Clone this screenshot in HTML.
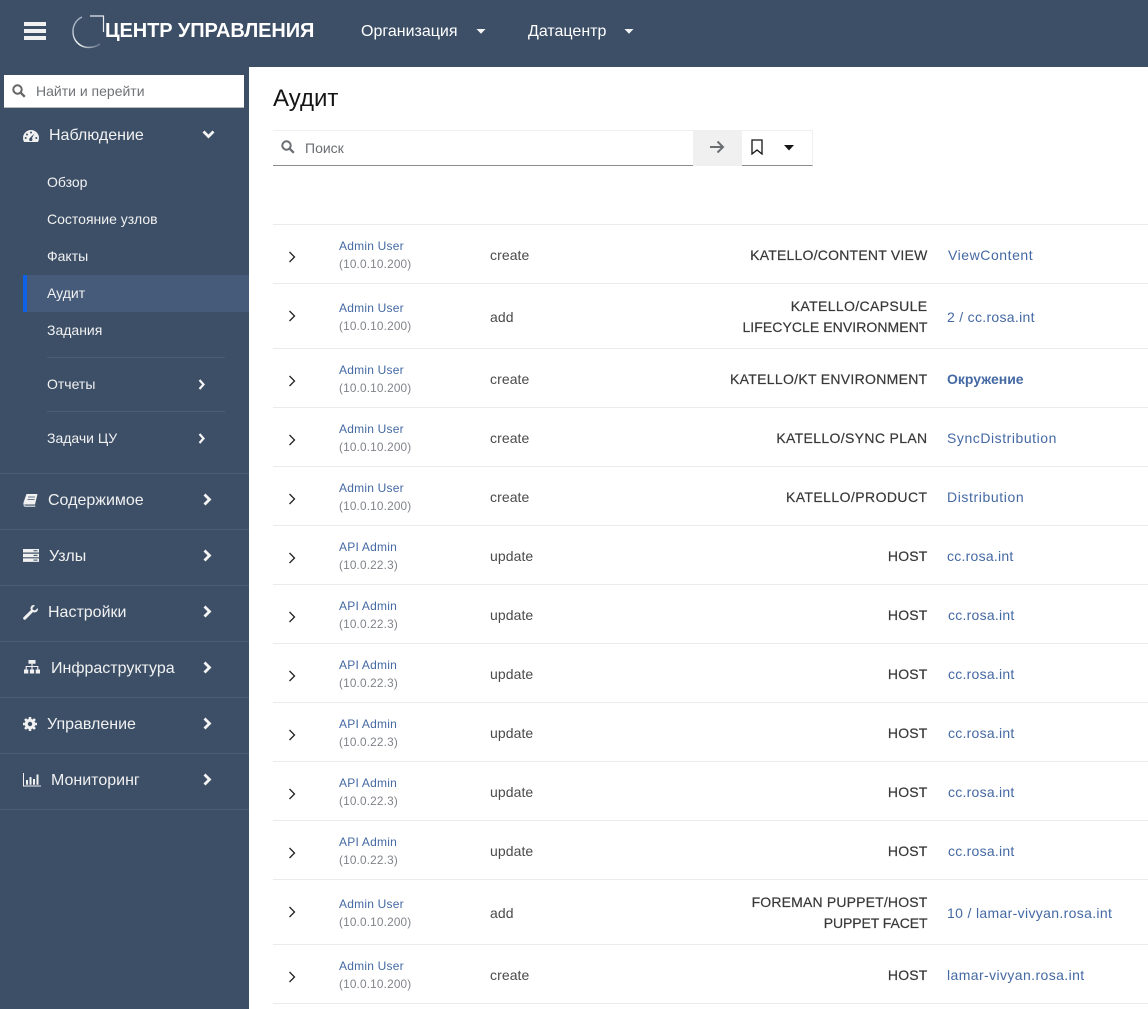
<!DOCTYPE html>
<html lang="ru"><head><meta charset="utf-8"><title>Аудит</title>
<style>
html,body{margin:0;padding:0}
body{width:1148px;height:1009px;overflow:hidden;position:relative;background:#3c4f67;font-family:"Liberation Sans",sans-serif}
.t{position:absolute;white-space:nowrap;line-height:20px}
.main{position:absolute;left:249px;top:67px;width:899px;height:942px;background:#fff}
.hd{color:#fff;font-size:16px;margin-top:1px}
.nav{color:#f1f1f1;font-size:16px;left:0;margin-top:1px}
.sub{color:#f1f1f1;font-size:14px;left:47px}
.sep{position:absolute;height:1px;background:#4a5d78}
.rs{position:absolute;left:273px;width:875px;height:1px;background:#ebebeb}
.u{left:339px;font-size:12px;color:#4469a3;letter-spacing:.22px}
.ip{left:339px;font-size:11.8px;color:#80848a;letter-spacing:.17px}
.a{left:490px;font-size:14px;color:#4a4a4a;letter-spacing:.08px}
.k{right:220.5px;font-size:14px;color:#383838;letter-spacing:.17px;font-weight:400;-webkit-text-stroke:.2px #383838}
.l{font-size:14px;color:#4469a3;letter-spacing:.25px}
svg{position:absolute;display:block}
</style></head><body>

<div style="position:absolute;left:24px;top:22px;width:22px;height:4px;background:#f1f1f1"></div>
<div style="position:absolute;left:24px;top:29px;width:22px;height:4px;background:#f1f1f1"></div>
<div style="position:absolute;left:24px;top:36px;width:22px;height:4px;background:#f1f1f1"></div>

<svg style="left:70px;top:14px" width="36" height="36" viewBox="0 0 36 36" fill="none">
<defs><linearGradient id="g1" x1="0" y1="0" x2="1" y2="1"><stop offset="0" stop-color="#8b9ab0"/><stop offset=".55" stop-color="#fff"/><stop offset="1" stop-color="#59697f"/></linearGradient></defs>
<path d="M12 3A15.500 15.500 0 0 0 3 18A15.500 15.500 0 0 0 18 33.500Q25 33.500 30 30" stroke="url(#g1)" stroke-width="1.400"/>
<path d="M20 2H33.500V18" stroke="#e7ebf0" stroke-width="1.200"/>
</svg>
<div class="t" style="left:105px;top:21px;color:#fff;font-size:20px;font-weight:700;letter-spacing:-.1px">ЦЕНТР УПРАВЛЕНИЯ</div>
<div class="t hd" style="left:361px;top:21px">Организация</div>
<svg style="left:476px;top:29px" width="10" height="6"><path d="M.5 0H9.500L5 4.800Z" fill="#f4f4f4"/></svg>
<div class="t hd" style="left:528px;top:21px">Датацентр</div>
<svg style="left:624px;top:29px" width="10" height="6"><path d="M.5 0H9.500L5 4.800Z" fill="#f4f4f4"/></svg>

<div style="position:absolute;left:4px;top:75px;width:240px;height:32px;background:#fff;border-bottom:1px solid #b8bbbe"></div>
<svg style="left:12px;top:84px" width="14" height="14" viewBox="0 0 14 14" fill="none"><circle cx="5.500" cy="5.500" r="4.200" stroke="#666" stroke-width="2"/><path d="M8.800 8.800L12.800 12.800" stroke="#666" stroke-width="2.400"/></svg>
<div class="t" style="left:36px;top:81px;font-size:14px;color:#6f7276">Найти и перейти</div>

<svg style="left:23px;top:128px" width="16" height="16" viewBox="0 0 16 16"><path d="M8 2A8 8 0 0 0 0 10Q0 12.500 1.200 14H14.800Q16 12.500 16 10A8 8 0 0 0 8 2Z" fill="#f1f1f1"/><circle cx="8" cy="4.500" r="1" fill="#3c4f67"/><circle cx="4" cy="6.500" r="1" fill="#3c4f67"/><circle cx="2.700" cy="10" r="1" fill="#3c4f67"/><circle cx="13.300" cy="10" r="1" fill="#3c4f67"/><path d="M11.500 5.500L8.800 10.500L7 9.800Z" fill="#3c4f67"/><circle cx="7.800" cy="11.500" r="1.600" fill="#3c4f67"/></svg>
<div class="t nav" style="left:49px;top:125px">Наблюдение</div>
<svg style="left:202px;top:130px" width="13" height="9" fill="none"><path d="M1.500 1.500L6.500 6.500L11.500 1.500" stroke="#f4f4f4" stroke-width="2.800"/></svg>

<div class="t sub" style="top:172px">Обзор</div>
<div class="t sub" style="top:209px">Состояние узлов</div>
<div class="t sub" style="top:246px">Факты</div>
<div style="position:absolute;left:23px;top:275px;width:226px;height:37px;background:#465b79"></div>
<div style="position:absolute;left:23px;top:275px;width:4px;height:37px;background:#0f62e6"></div>
<div class="t sub" style="top:283px">Аудит</div>
<div class="t sub" style="top:320px">Задания</div>
<div class="sep" style="left:47px;top:357px;width:178px"></div>
<div class="t sub" style="top:374px">Отчеты</div>
<svg style="left:198px;top:379px" width="8" height="11" fill="none"><path d="M1.500 1L5.500 5.500L1.500 10" stroke="#f4f4f4" stroke-width="2.200"/></svg>
<div class="sep" style="left:47px;top:411px;width:178px"></div>
<div class="t sub" style="top:428px">Задачи ЦУ</div>
<svg style="left:198px;top:433px" width="8" height="11" fill="none"><path d="M1.500 1L5.500 5.500L1.500 10" stroke="#f4f4f4" stroke-width="2.200"/></svg>
<div class="sep" style="left:0;top:473px;width:249px"></div>

<svg style="left:23px;top:493px" width="15" height="15" viewBox="0 0 15 15"><path d="M3.500 1H14.500L12 11.500H1.500Q0 11.500 .5 9.500Z" fill="#f1f1f1"/><path d="M.5 11Q.3 13.800 2.500 13.800H12L12.600 12.600H2.500Q1 12.600 1.500 11.500Z" fill="#f1f1f1"/><path d="M5 4H12M4.500 6.500H11.500" stroke="#3c4f67" stroke-width=".8"/></svg>
<div class="t nav" style="left:48px;top:490px">Содержимое</div>
<svg style="left:203px;top:493px" width="9" height="13" fill="none"><path d="M1.500 1.500L6.500 6.500L1.500 11.500" stroke="#f4f4f4" stroke-width="2.800"/></svg>
<div class="sep" style="left:0;top:529px;width:249px"></div>

<svg style="left:23px;top:549px" width="16" height="13" viewBox="0 0 16 13"><path d="M0 0H16V3.500H0ZM0 4.700H16V8.200H0ZM0 9.400H16V12.900H0Z" fill="#f1f1f1"/><path d="M10.500 1.700H14.500M10.500 6.400H14.500M10.500 11.100H14.500" stroke="#3c4f67" stroke-width="1"/></svg>
<div class="t nav" style="left:49px;top:546px">Узлы</div>
<svg style="left:203px;top:549px" width="9" height="13" fill="none"><path d="M1.500 1.500L6.500 6.500L1.500 11.500" stroke="#f4f4f4" stroke-width="2.800"/></svg>
<div class="sep" style="left:0;top:585px;width:249px"></div>

<svg style="left:23px;top:605px" width="15" height="15" viewBox="0 0 15 15"><path d="M10.800 0Q8 0 7.500 3Q7.400 4.200 8 5L.5 12.300Q-.3 13.300 .5 14.300Q1.600 15.300 2.700 14.400L10 7Q11 7.600 12 7.400Q14.700 7 15 4L14.800 3.100L12 5.500L9.800 4.800L9.500 3L12 .3Z" fill="#f1f1f1"/></svg>
<div class="t nav" style="left:48px;top:602px">Настройки</div>
<svg style="left:203px;top:605px" width="9" height="13" fill="none"><path d="M1.500 1.500L6.500 6.500L1.500 11.500" stroke="#f4f4f4" stroke-width="2.800"/></svg>
<div class="sep" style="left:0;top:641px;width:249px"></div>

<svg style="left:24px;top:660px" width="16" height="14" viewBox="0 0 16 14"><path d="M4.500 0H11.500V3.800H4.500ZM0 9.500H4.300V13.500H0ZM5.900 9.500H10.100V13.500H5.900ZM11.700 9.500H16V13.500H11.700Z" fill="#f1f1f1"/><path d="M2.200 9.500V6.500H13.800V9.500M8 3.800V9.500" stroke="#f1f1f1" stroke-width="1.100" fill="none"/></svg>
<div class="t nav" style="left:51px;top:658px">Инфраструктура</div>
<svg style="left:203px;top:661px" width="9" height="13" fill="none"><path d="M1.500 1.500L6.500 6.500L1.500 11.500" stroke="#f4f4f4" stroke-width="2.800"/></svg>
<div class="sep" style="left:0;top:697px;width:249px"></div>

<svg style="left:23px;top:717px" width="14" height="14" viewBox="0 0 14 14"><circle cx="7" cy="7" r="3.900" fill="none" stroke="#f1f1f1" stroke-width="2.800"/><path d="M7 0V14M0 7H14M2 2L12 12M12 2L2 12" stroke="#f1f1f1" stroke-width="2.600"/><circle cx="7" cy="7" r="2.200" fill="#3c4f67"/></svg>
<div class="t nav" style="left:47px;top:714px">Управление</div>
<svg style="left:203px;top:717px" width="9" height="13" fill="none"><path d="M1.500 1.500L6.500 6.500L1.500 11.500" stroke="#f4f4f4" stroke-width="2.800"/></svg>
<div class="sep" style="left:0;top:753px;width:249px"></div>

<svg style="left:23px;top:773px" width="18" height="14" viewBox="0 0 18 14"><path d="M.5 0V13H18" stroke="#f1f1f1" fill="none" stroke-width="1"/><path d="M3 7H5V11.800H3ZM6.500 4H8.500V11.800H6.500ZM10 6H12V11.800H10ZM13.500 1.500H15.500V11.800H13.500Z" fill="#f1f1f1"/></svg>
<div class="t nav" style="left:51px;top:770px">Мониторинг</div>
<svg style="left:203px;top:773px" width="9" height="13" fill="none"><path d="M1.500 1.500L6.500 6.500L1.500 11.500" stroke="#f4f4f4" stroke-width="2.800"/></svg>
<div class="sep" style="left:0;top:809px;width:249px"></div>

<div class="main"></div>
<div class="t" style="left:273px;top:86px;font-size:24px;line-height:26px;color:#151515">Аудит</div>

<div style="position:absolute;left:273px;top:130px;width:420px;height:34px;border-top:1px solid #f0f0f0;border-bottom:1px solid #8a8d90"></div>
<svg style="left:281px;top:140px" width="14" height="14" viewBox="0 0 14 14" fill="none"><circle cx="5.500" cy="5.500" r="4.200" stroke="#6a6e73" stroke-width="2"/><path d="M8.800 8.800L12.800 12.800" stroke="#6a6e73" stroke-width="2.300"/></svg>
<div class="t" style="left:305px;top:138px;font-size:14px;color:#6a6e73">Поиск</div>
<div style="position:absolute;left:693px;top:130px;width:49px;height:36px;background:#f0f0f0"></div>
<svg style="left:709px;top:140px" width="16" height="14" viewBox="0 0 16 14" fill="none"><path d="M1 7H14M8.500 1.500L14 7L8.500 12.500" stroke="#6a6e73" stroke-width="2"/></svg>
<div style="position:absolute;left:742px;top:130px;width:70px;height:34px;border-top:1px solid #f0f0f0;border-right:1px solid #f0f0f0;border-bottom:1px solid #8a8d90"></div>
<svg style="left:751px;top:139px" width="12" height="16" viewBox="0 0 12 16" fill="none"><path d="M1 1H11V15L6 11L1 15Z" stroke="#151515" stroke-width="1.300"/></svg>
<svg style="left:784px;top:145px" width="10" height="6"><path d="M0 0H10L5 5.500Z" fill="#151515"/></svg>

<div class="rs" style="top:224px"></div>
<div class="rs" style="top:283px"></div>
<div class="rs" style="top:348px"></div>
<div class="rs" style="top:407px"></div>
<div class="rs" style="top:466px"></div>
<div class="rs" style="top:525px"></div>
<div class="rs" style="top:584px"></div>
<div class="rs" style="top:643px"></div>
<div class="rs" style="top:702px"></div>
<div class="rs" style="top:761px"></div>
<div class="rs" style="top:820px"></div>
<div class="rs" style="top:879px"></div>
<div class="rs" style="top:944px"></div>
<div class="rs" style="top:1003px"></div>

<svg style="left:288px;top:251px" width="8" height="12" fill="none"><path d="M1.500 1L6.500 6L1.500 11" stroke="#222" stroke-width="1.300"/></svg>
<div class="t u" style="top:236px">Admin User</div><div class="t ip" style="top:254px">(10.0.10.200)</div>
<div class="t a" style="top:245px">create</div>
<div class="t k" style="top:245px;letter-spacing:.22px">KATELLO/CONTENT VIEW</div>
<div class="t l" style="left:948px;top:245px;letter-spacing:.55px">ViewContent</div>

<svg style="left:288px;top:310px" width="8" height="12" fill="none"><path d="M1.500 1L6.500 6L1.500 11" stroke="#222" stroke-width="1.300"/></svg>
<div class="t u" style="top:298px">Admin User</div><div class="t ip" style="top:316px">(10.0.10.200)</div>
<div class="t a" style="top:307px">add</div>
<div class="t k" style="top:296px;letter-spacing:.37px">KATELLO/CAPSULE</div>
<div class="t k" style="top:317px;letter-spacing:.07px">LIFECYCLE ENVIRONMENT</div>
<div class="t l" style="left:947px;top:307px;letter-spacing:.3px">2 / cc.rosa.int</div>

<svg style="left:288px;top:375px" width="8" height="12" fill="none"><path d="M1.500 1L6.500 6L1.500 11" stroke="#222" stroke-width="1.300"/></svg>
<div class="t u" style="top:360px">Admin User</div><div class="t ip" style="top:378px">(10.0.10.200)</div>
<div class="t a" style="top:369px">create</div>
<div class="t k" style="top:369px;letter-spacing:.3px">KATELLO/KT ENVIRONMENT</div>
<div class="t l" style="left:947px;top:369px;font-weight:700;font-size:14px;letter-spacing:0">Окружение</div>

<svg style="left:288px;top:434px" width="8" height="12" fill="none"><path d="M1.500 1L6.500 6L1.500 11" stroke="#222" stroke-width="1.300"/></svg>
<div class="t u" style="top:419px">Admin User</div><div class="t ip" style="top:437px">(10.0.10.200)</div>
<div class="t a" style="top:428px">create</div>
<div class="t k" style="top:428px;letter-spacing:.35px">KATELLO/SYNC PLAN</div>
<div class="t l" style="left:947px;top:428px;letter-spacing:.55px">SyncDistribution</div>

<svg style="left:288px;top:493px" width="8" height="12" fill="none"><path d="M1.500 1L6.500 6L1.500 11" stroke="#222" stroke-width="1.300"/></svg>
<div class="t u" style="top:478px">Admin User</div><div class="t ip" style="top:496px">(10.0.10.200)</div>
<div class="t a" style="top:487px">create</div>
<div class="t k" style="top:487px;letter-spacing:.43px">KATELLO/PRODUCT</div>
<div class="t l" style="left:947px;top:487px;letter-spacing:.6px">Distribution</div>

<svg style="left:288px;top:552px" width="8" height="12" fill="none"><path d="M1.500 1L6.500 6L1.500 11" stroke="#222" stroke-width="1.300"/></svg>
<div class="t u" style="top:537px">API Admin</div><div class="t ip" style="top:555px">(10.0.22.3)</div>
<div class="t a" style="top:546px">update</div>
<div class="t k" style="top:546px">HOST</div>
<div class="t l" style="left:947px;top:546px">cc.rosa.int</div>

<svg style="left:288px;top:611px" width="8" height="12" fill="none"><path d="M1.500 1L6.500 6L1.500 11" stroke="#222" stroke-width="1.300"/></svg>
<div class="t u" style="top:596px">API Admin</div><div class="t ip" style="top:614px">(10.0.22.3)</div>
<div class="t a" style="top:605px">update</div>
<div class="t k" style="top:605px">HOST</div>
<div class="t l" style="left:948px;top:605px">cc.rosa.int</div>

<svg style="left:288px;top:670px" width="8" height="12" fill="none"><path d="M1.500 1L6.500 6L1.500 11" stroke="#222" stroke-width="1.300"/></svg>
<div class="t u" style="top:655px">API Admin</div><div class="t ip" style="top:673px">(10.0.22.3)</div>
<div class="t a" style="top:664px">update</div>
<div class="t k" style="top:664px">HOST</div>
<div class="t l" style="left:948px;top:664px">cc.rosa.int</div>

<svg style="left:288px;top:729px" width="8" height="12" fill="none"><path d="M1.500 1L6.500 6L1.500 11" stroke="#222" stroke-width="1.300"/></svg>
<div class="t u" style="top:714px">API Admin</div><div class="t ip" style="top:732px">(10.0.22.3)</div>
<div class="t a" style="top:723px">update</div>
<div class="t k" style="top:723px">HOST</div>
<div class="t l" style="left:948px;top:723px">cc.rosa.int</div>

<svg style="left:288px;top:788px" width="8" height="12" fill="none"><path d="M1.500 1L6.500 6L1.500 11" stroke="#222" stroke-width="1.300"/></svg>
<div class="t u" style="top:773px">API Admin</div><div class="t ip" style="top:791px">(10.0.22.3)</div>
<div class="t a" style="top:782px">update</div>
<div class="t k" style="top:782px">HOST</div>
<div class="t l" style="left:948px;top:782px">cc.rosa.int</div>

<svg style="left:288px;top:847px" width="8" height="12" fill="none"><path d="M1.500 1L6.500 6L1.500 11" stroke="#222" stroke-width="1.300"/></svg>
<div class="t u" style="top:832px">API Admin</div><div class="t ip" style="top:850px">(10.0.22.3)</div>
<div class="t a" style="top:841px">update</div>
<div class="t k" style="top:841px">HOST</div>
<div class="t l" style="left:948px;top:841px">cc.rosa.int</div>

<svg style="left:288px;top:906px" width="8" height="12" fill="none"><path d="M1.500 1L6.500 6L1.500 11" stroke="#222" stroke-width="1.300"/></svg>
<div class="t u" style="top:894px">Admin User</div><div class="t ip" style="top:912px">(10.0.10.200)</div>
<div class="t a" style="top:903px">add</div>
<div class="t k" style="top:892px">FOREMAN PUPPET/HOST</div>
<div class="t k" style="top:913px;letter-spacing:-.08px">PUPPET FACET</div>
<div class="t l" style="left:947px;top:903px;letter-spacing:.34px">10 / lamar-vivyan.rosa.int</div>

<svg style="left:288px;top:971px" width="8" height="12" fill="none"><path d="M1.500 1L6.500 6L1.500 11" stroke="#222" stroke-width="1.300"/></svg>
<div class="t u" style="top:956px">Admin User</div><div class="t ip" style="top:974px">(10.0.10.200)</div>
<div class="t a" style="top:965px">create</div>
<div class="t k" style="top:965px">HOST</div>
<div class="t l" style="left:947px;top:965px;letter-spacing:.4px">lamar-vivyan.rosa.int</div>

</body></html>
